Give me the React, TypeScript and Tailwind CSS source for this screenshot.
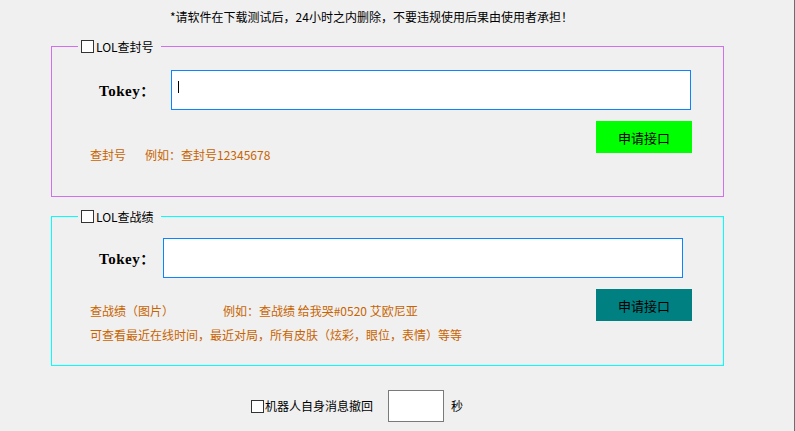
import React from "react";

function CheckBox() {
  return <span className="block w-[13px] h-[13px] border border-[#333333] bg-white shrink-0" />;
}

function Legend({ label }: { label: string }) {
  return (
    <legend className="ml-[26px] pl-[3px] pr-[7px]">
      <div className="flex items-center h-[13px] gap-[2px] leading-[13px]">
        <CheckBox />
        <span>{label}</span>
      </div>
    </legend>
  );
}

function TokeyLabel({ width }: { width: string }) {
  return (
    <span className={"ml-[47px] flex items-baseline font-bold text-[14px] leading-[14px] " + width}>
      <span className="font-['Liberation_Serif'] text-[15px] tracking-[0.5px]">Tokey</span>
      <span>：</span>
    </span>
  );
}

export default function App() {
  return (
    <div className="w-[795px] h-[431px] overflow-hidden bg-[#f0f0f0] border-r border-[#6e6e6e] font-['Noto_Sans_CJK_SC',sans-serif] text-[12px] leading-[12px] text-black">
      <div className="h-[40px] pt-[11px] pl-[170px]">
        *请软件在下载测试后，24小时之内删除，不要违规使用后果由使用者承担！
      </div>

      {/* 查封号 */}
      <fieldset className="ml-[51px] w-[673px] h-[157px] border border-[#d070f0]">
        <Legend label="LOL查封号" />
        <div className="flex items-center pt-[17px]">
          <TokeyLabel width="w-[72px]" />
          <div className="w-[520px] h-[40px] bg-white border border-[#0a84ff] pl-[6px] pt-[10px]">
            <div className="w-px h-[12px] bg-black" />
          </div>
        </div>
        <div className="flex items-start mt-[11px]">
          <div className="ml-[38px] mt-[28px] text-[#c86400]">
            <span>查封号</span>
            <span className="ml-[19px]">例如：查封号12345678</span>
          </div>
          <button className="ml-auto mr-[31px] w-[96px] h-[32px] bg-[#00ff00] text-black text-[13px] leading-[13px]">
            申请接口
          </button>
        </div>
      </fieldset>

      {/* 查战绩 */}
      <fieldset className="mt-[13px] ml-[51px] w-[673px] h-[156px] border border-[#00ffff]">
        <Legend label="LOL查战绩" />
        <div className="flex items-center pt-[15px]">
          <TokeyLabel width="w-[64px]" />
          <div className="w-[520px] h-[40px] bg-white border border-[#0a84ff]" />
        </div>
        <div className="flex items-start mt-[11px]">
          <div className="ml-[38px] mt-[16px] text-[#c86400] flex flex-col gap-[12px]">
            <div className="flex">
              <span className="w-[133px]">查战绩（图片）</span>
              <span>例如：查战绩 给我哭#0520 艾欧尼亚</span>
            </div>
            <div>可查看最近在线时间，最近对局，所有皮肤（炫彩，眼位，表情）等等</div>
          </div>
          <button className="ml-auto mr-[31px] w-[96px] h-[32px] bg-[#008080] text-black text-[13px] leading-[13px]">
            申请接口
          </button>
        </div>
      </fieldset>

      {/* 撤回 */}
      <div className="flex items-center mt-[24px] ml-[251px]">
        <CheckBox />
        <span className="ml-[1px]">机器人自身消息撤回</span>
        <div className="ml-[15px] w-[56px] h-[32px] bg-white border border-[#7a7a7a]" />
        <span className="ml-[7px]">秒</span>
      </div>
    </div>
  );
}
